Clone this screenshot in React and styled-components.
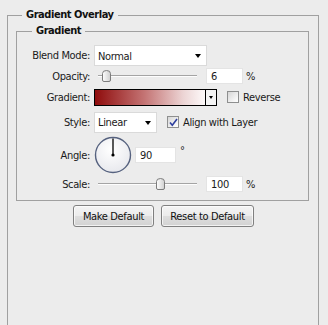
import React from 'react';
import styled, { createGlobalStyle } from 'styled-components';

const Global = createGlobalStyle`
  html, body { margin: 0; padding: 0; background: #ececec; }
  body {
    font-family: "DejaVu Sans Condensed", "DejaVu Sans", sans-serif;
    font-size: 11px;
    letter-spacing: -0.35px;
    color: #1a1a1a;
    overflow: hidden;
  }
  #root { width: 328px; height: 325px; overflow: hidden; }
`;

const Group = styled.fieldset`
  margin: ${p => p.$margin};
  padding: ${p => p.$padding};
  border: 1px solid #a0a0a0;
  min-width: 0;
  min-height: ${p => p.$minHeight || 0}px;
  box-sizing: border-box;
`;

const Legend = styled.legend`
  margin-left: ${p => p.$offset}px;
  padding: 0 4px;
  font-weight: bold;
  line-height: 14px;
  letter-spacing: -0.45px;
  color: #111;
`;

const Row = styled.div`
  display: grid;
  grid-template-columns: 73px 1fr;
  column-gap: 4px;
  align-items: center;
  height: ${p => p.$h}px;
`;

const Label = styled.span`
  text-align: right;
  white-space: nowrap;
`;

const Controls = styled.div`
  display: flex;
  align-items: center;
  min-width: 0;
`;

const Select = styled.div`
  display: flex;
  align-items: center;
  justify-content: space-between;
  box-sizing: border-box;
  width: ${p => p.$w}px;
  height: 21px;
  padding: 1px 5px 0 3px;
  background: #fff;
  border: 1px solid #dadada;
`;

const Arrow = styled.span`
  width: 0;
  height: 0;
  border-left: 3.5px solid transparent;
  border-right: 3.5px solid transparent;
  border-top: 4px solid #000;
`;

const SliderBox = styled.div`
  position: relative;
  width: 104px;
  height: 14px;
  flex: none;
`;

const Track = styled.div`
  position: absolute;
  left: 4px;
  width: 99px;
  top: 6px;
  height: 0;
  border-top: 1px solid #a4a4a4;
  border-bottom: 1px solid #fdfdfd;
`;

const Thumb = styled.svg`
  position: absolute;
  top: 1px;
  width: 9px;
  height: 12px;
`;

const NumInput = styled.div`
  box-sizing: border-box;
  width: ${p => p.$w}px;
  height: 16px;
  margin-left: ${p => p.$ml}px;
  padding: 1px 0 0 4px;
  background: #fff;
  border: 1px solid #e4e4e4;
  display: flex;
  align-items: center;
  flex: none;
`;

const Unit = styled.span`
  margin-left: ${p => p.$ml}px;
  margin-bottom: ${p => (p.$sup ? '9px' : '0')};
`;

const Swatch = styled.div`
  display: flex;
  box-sizing: border-box;
  width: 123px;
  height: 17px;
  border: 1px solid #000;
  flex: none;
`;

const GradientFill = styled.div`
  flex: 1;
  background: linear-gradient(to right, #8f0c0c 0%, #c47474 45%, #ecd4d4 80%, #fdfafa 100%);
`;

const SwatchButton = styled.div`
  width: 10px;
  border-left: 1px solid #000;
  background: #f4f4f4;
  display: flex;
  align-items: center;
  justify-content: center;
`;

const SmallArrow = styled.span`
  width: 0;
  height: 0;
  border-left: 2.5px solid transparent;
  border-right: 2.5px solid transparent;
  border-top: 3px solid #000;
`;

const Check = styled.label`
  display: flex;
  align-items: center;
  gap: 4px;
  margin-left: ${p => p.$ml}px;
  white-space: nowrap;
`;

const Box = styled.span`
  box-sizing: border-box;
  width: 12px;
  height: 12px;
  border: 1px solid #8e8f8f;
  background: linear-gradient(135deg, #d6d6d6 0%, #f4f4f4 70%, #ffffff 100%);
  display: flex;
  align-items: center;
  justify-content: center;
  flex: none;
`;

const Dial = styled.svg`
  width: 38px;
  height: 38px;
  flex: none;
`;

const ButtonRow = styled.div`
  display: flex;
  gap: 7px;
  margin-top: 4px;
  padding-left: 57px;
`;

const Button = styled.button`
  box-sizing: border-box;
  width: ${p => p.$w}px;
  height: 22px;
  padding: 0;
  font: inherit;
  letter-spacing: inherit;
  color: #111;
  border: 1px solid #808080;
  border-radius: 3px;
  background: linear-gradient(#f4f4f4 0%, #ececec 48%, #dedede 52%, #d2d2d2 100%);
  box-shadow: inset 0 0 0 1px rgba(255, 255, 255, 0.7);
`;

function Slider({ frac }) {
  return (
    <SliderBox>
      <Track />
      <Thumb style={{ left: `${Math.round(frac * 94) + 2}px` }} viewBox="0 0 9 12">
        <defs>
          <linearGradient id="tg" x1="0" y1="0" x2="1" y2="0">
            <stop offset="0" stopColor="#ffffff" />
            <stop offset="1" stopColor="#cfcfcf" />
          </linearGradient>
        </defs>
        <path d="M0.5 3.5 Q0.5 0.5 4.5 0.5 Q8.5 0.5 8.5 3.5 V10 Q8.5 11.5 7 11.5 H2 Q0.5 11.5 0.5 10 Z" fill="url(#tg)" stroke="#7c7c7c" />
      </Thumb>
    </SliderBox>
  );
}

function CheckBox({ checked, label, ml }) {
  return (
    <Check $ml={ml}>
      <Box>
        {checked && (
          <svg width="9" height="9" viewBox="0 0 9 9">
            <path d="M1 4.5 L3.3 7.3 L8 1" fill="none" stroke="#2e3f9e" strokeWidth="1.6" />
          </svg>
        )}
      </Box>
      <span>{label}</span>
    </Check>
  );
}

export default function App() {
  return (
    <>
      <Global />
      <Group $margin="8px 9px 0 7px" $padding="0 9px 0 8px" $minHeight={340}>
        <Legend $offset={6}>Gradient Overlay</Legend>
        <Group $margin="2px 0 0 0" $padding="7px 0 4px 0">
          <Legend $offset={15}>Gradient</Legend>
          <Row $h={21}>
            <Label>Blend Mode:</Label>
            <Controls>
              <Select $w={113}>
                <span>Normal</span>
                <Arrow />
              </Select>
            </Controls>
          </Row>
          <Row $h={20}>
            <Label>Opacity:</Label>
            <Controls>
              <Slider frac={6 / 100} />
              <NumInput $w={37} $ml={8}>6</NumInput>
              <Unit $ml={3}>%</Unit>
            </Controls>
          </Row>
          <Row $h={22}>
            <Label>Gradient:</Label>
            <Controls>
              <Swatch>
                <GradientFill />
                <SwatchButton>
                  <SmallArrow />
                </SwatchButton>
              </Swatch>
              <CheckBox ml={10} label="Reverse" />
            </Controls>
          </Row>
          <Row $h={28}>
            <Label>Style:</Label>
            <Controls>
              <Select $w={63}>
                <span>Linear</span>
                <Arrow />
              </Select>
              <CheckBox ml={10} checked label="Align with Layer" />
            </Controls>
          </Row>
          <Row $h={36}>
            <Label>Angle:</Label>
            <Controls>
              <Dial viewBox="0 0 38 38">
                <defs>
                  <radialGradient id="dg" cx="0.45" cy="0.35" r="0.7">
                    <stop offset="0" stopColor="#ffffff" />
                    <stop offset="1" stopColor="#e6e7ec" />
                  </radialGradient>
                </defs>
                <circle cx="19" cy="19" r="17.5" fill="url(#dg)" stroke="#56627f" strokeWidth="1.4" />
                <line x1="19" y1="19" x2="19" y2="2.5" stroke="#000" strokeWidth="1.3" />
                <circle cx="19" cy="19" r="1.6" fill="#000" />
              </Dial>
              <NumInput $w={41} $ml={3}>90</NumInput>
              <Unit $ml={4} $sup>°</Unit>
            </Controls>
          </Row>
          <Row $h={24}>
            <Label>Scale:</Label>
            <Controls>
              <Slider frac={(100 - 10) / 140} />
              <NumInput $w={37} $ml={8}>100</NumInput>
              <Unit $ml={3}>%</Unit>
            </Controls>
          </Row>
        </Group>
        <ButtonRow>
          <Button $w={81}>Make Default</Button>
          <Button $w={93}>Reset to Default</Button>
        </ButtonRow>
      </Group>
    </>
  );
}
